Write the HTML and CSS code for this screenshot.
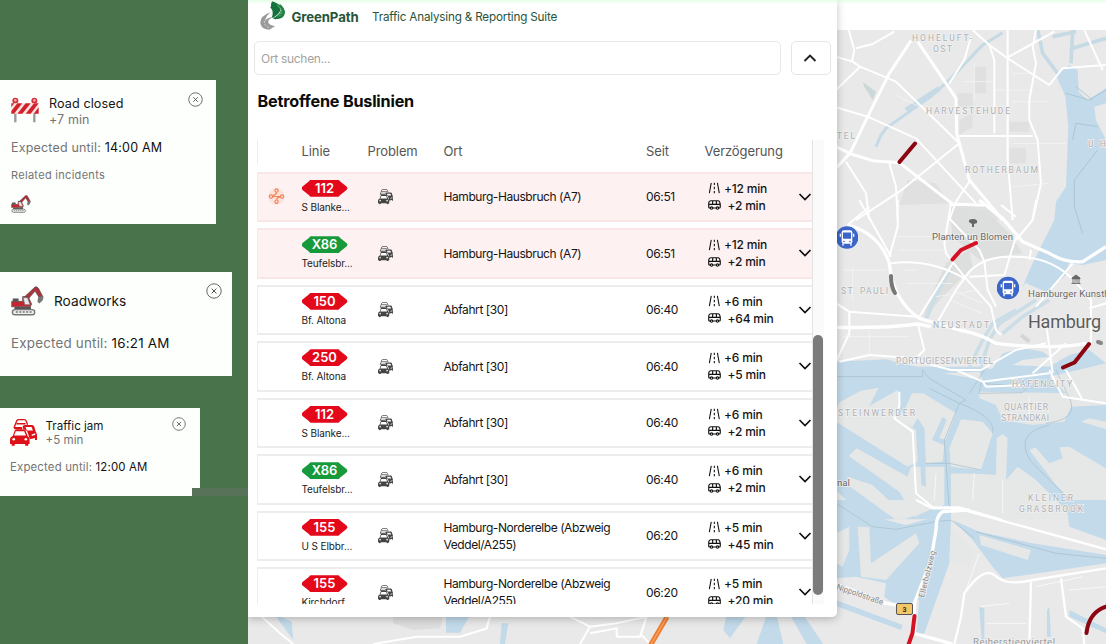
FILE: index.html
```html
<!DOCTYPE html>
<html lang="de">
<head>
<meta charset="utf-8">
<title>GreenPath</title>
<link rel="stylesheet" href="styles.css">
</head>
<body>
<svg class="defs" width="0" height="0" aria-hidden="true">
  <symbol id="close" viewBox="0 0 16 16"><circle cx="8" cy="8" r="7.2" fill="none" stroke="#666" stroke-width="1"/><path d="M5.6 5.6l4.8 4.8M10.4 5.6l-4.8 4.8" stroke="#555" stroke-width="1"/></symbol>
  <symbol id="digger" viewBox="0 0 96 86">
    <path d="M34 36L70 2Q76 0 80 6L93 31L84 36L70 14L44 44Z" fill="#a9343b" stroke="#5c4449" stroke-width="2"/>
    <path d="M79 32L93 28Q98 40 82 50L77 45Z" fill="#777"/>
    <path d="M2 44V60H56L60 52L50 30H34V44Z" fill="#c5252d" stroke="#5d4b4f" stroke-width="2"/>
    <path d="M35 33H48L56 54H40Z" fill="#e9e6ea" stroke="#666" stroke-width="2"/>
    <path d="M5 36H22V45H5ZM10 60H58V67H10Z" fill="#555"/>
    <rect x="4" y="68" width="65" height="15" rx="7.5" fill="#eee" stroke="#777" stroke-width="4"/>
    <path d="M14 75H60" stroke="#777" stroke-width="4" stroke-dasharray="6 4"/>
  </symbol>
  <symbol id="jam" viewBox="0 0 80 80">
    <path d="M12 27L15 18L20 5Q22 2 26 2H42Q46 2 48 6L52 17" fill="none" stroke="currentColor" stroke-width="4"/>
    <path d="M12 24H36V30H12Z" fill="currentColor"/><path d="M19 14H46" stroke="currentColor" stroke-width="4"/>
    <path d="M38 20Q42 17 48 18H66Q70 18 72 23L76 37Q80 42 80 48V62H74V56L59 60L51 36L38 28Z" fill="currentColor"/>
    <path d="M46 24H64L68 34H50Z" fill="#fff"/><path d="M64 46L75 42V47L65 50Z" fill="#fff"/>
    <path d="M8 50L14 34Q16 30 21 30H39Q44 30 46 34L52 50Q58 54 58 60V74H54V79H45V74H14V79H5V74H0V60Q0 53 8 50Z" fill="currentColor"/>
    <path d="M17 36H42L47 49H12Z" fill="#fff"/><circle cx="11" cy="60" r="4" fill="#fff"/><circle cx="47" cy="60" r="4" fill="#fff"/>
  </symbol>
  <symbol id="road" viewBox="0 0 14 14"><path d="M3.200 1L1 13M10.400 1L12.600 13M6.800 1V3.600M6.800 5.600V8.400M6.800 10.400V13" fill="none" stroke="#111" stroke-width="1.250"/></symbol>
  <symbol id="bus" viewBox="0 0 14 12"><path d="M2.600 9.200H1.800Q.8 9.200 .8 8.200V3.600Q1 1.400 3 1.400H11Q12.600 1.400 13.200 5V8.200Q13.200 9.200 12.200 9.200H11.400M5 9.200H9M.8 5.400H13M5 1.400V5.400M9 1.400V5.400" fill="none" stroke="#111" stroke-width="1.250"/><circle cx="3.800" cy="9.300" r="1.300" fill="none" stroke="#111" stroke-width="1.200"/><circle cx="10.200" cy="9.300" r="1.300" fill="none" stroke="#111" stroke-width="1.200"/></symbol>
  <symbol id="chev" viewBox="0 0 14 10"><path d="M1.500 2L7 7.600L12.500 2" fill="none" stroke="#111" stroke-width="1.700"/></symbol>
  <symbol id="stop" viewBox="0 0 66 72"><circle cx="33" cy="36" r="34" fill="#3b65c8"/><rect x="17" y="14" width="32" height="41" rx="6" fill="#fff"/><rect x="21" y="21" width="24" height="19" rx="1" fill="#3b65c8"/><path d="M13 25V34M53 25V34M21 54V61M45 54V61" stroke="#fff" stroke-width="4"/><circle cx="24" cy="48" r="2.500" fill="#3b65c8"/><circle cx="42" cy="48" r="2.500" fill="#3b65c8"/></symbol>
</svg>

<div class="page">
  <aside class="incidents">
    <article class="card closed">
      <header>
        <svg class="barrier" viewBox="0 0 82 78"><path d="M12 48V76M69 48V76" stroke="#999" stroke-width="7"/><circle cx="12" cy="11" r="9" fill="#d8303a"/><circle cx="69" cy="11" r="9" fill="#d8303a"/><circle cx="12" cy="10" r="4" fill="#f5a5a8"/><circle cx="69" cy="10" r="4" fill="#f5a5a8"/><rect y="19" width="82" height="31" fill="#f7e3e1"/><path d="M0 19H9L0 30ZM18 19H33L8 50H0V42ZM43 19H58L33 50H18ZM68 19H82L58 50H43ZM82 31V50H67Z" fill="#d4202b"/></svg>
        <div class="what"><h3>Road closed</h3><p>+7 min</p></div>
        <svg class="close"><use href="#close"/></svg>
      </header>
      <p class="until">Expected until: <b>14:00 AM</b></p>
      <p class="related">Related incidents</p>
      <svg class="mini"><use href="#digger"/></svg>
    </article>
    <article class="card works">
      <header>
        <svg class="dig"><use href="#digger"/></svg>
        <div class="what"><h3>Roadworks</h3></div>
        <svg class="close"><use href="#close"/></svg>
      </header>
      <p class="until">Expected until: <b>16:21 AM</b></p>
    </article>
    <article class="card traffic">
      <header>
        <svg class="cars"><use href="#jam"/></svg>
        <div class="what"><h3>Traffic jam</h3><p>+5 min</p></div>
        <svg class="close"><use href="#close"/></svg>
      </header>
      <p class="until">Expected until: <b>12:00 AM</b></p>
    </article>
    <i class="smudge"></i>
  </aside>

  <main class="app">
    <svg class="map" viewBox="248 30 858 614">
      <rect x="248" y="30" width="858" height="614" fill="#e9e9e9"/>
      <!-- parks and building blocks -->
      <g transform="translate(836 20) scale(.33333)" fill="#e0e0e0">
        <path d="M415 140H450V220H415ZM365 220H410V260H365ZM520 305H580V335H520ZM370 300L410 280V320L370 345ZM520 385H570V430H520ZM215 480L300 490L340 550L190 555ZM350 550L450 560L490 600H345Z"/>
        <path d="M80 185L120 215L110 240L85 200Z" fill="#cbd8d8"/><path d="M340 560L450 570L520 640L560 700L430 720L350 650Z" fill="#dcdfde"/>
        <path d="M330 730L400 690L410 740L320 830L260 900L275 850Z" fill="#dcdfde"/>
      </g>
      <!-- water -->
      <g transform="translate(836 20) scale(.33333)">
        <g fill="none" stroke="#c6dae5"><path d="M120 380L135 345L150 325L290 225L345 175L440 75L500 38" stroke-width="9"/><path d="M210 270L310 205" stroke-width="15"/><path d="M605 30L620 100L665 160M710 30L705 130M650 50L720 35M710 85L810 55" stroke-width="11"/></g>
        <path d="M660 165L700 135L725 150L728 215L755 240L810 205V250L775 260L780 300L810 360V720L740 735L700 730L630 710L560 800L585 740L655 600L660 545L690 500L697 320L688 230Z" fill="#c2daea"/>
        <path d="M690 220L760 240L810 210M710 360L720 310L785 320M720 200L770 240M785 390L715 480L715 560L740 640" fill="none" stroke="#9dbccd" stroke-width="2"/>
      </g>
      <g transform="translate(836 200) scale(.33333)">
        <path d="M570 250L605 165L700 185L690 225L630 275Z" fill="#c2daea"/>
        <path d="M345 205L320 250L290 310L272 355M400 500L435 430L470 370L540 330M435 500L460 420L490 370L600 300M500 400L560 350L640 300" fill="none" stroke="#cbdde7" stroke-width="11"/>
        <path d="M0 485L150 478L195 490L300 512L425 525L470 505L500 460L560 445L620 455L640 470L560 480L530 495L640 500L700 465L760 450L810 490V600H0Z" fill="#c2daea"/>
        <path d="M555 405L580 425" stroke="#d3d5d6" stroke-width="12" fill="none"/>
      </g>
      <g transform="translate(836 370) scale(.33333)">
        <path d="M0 -10H430L480 0H810V450H0Z" fill="#c2daea"/>
        <g fill="#e6e7e7">
          <path d="M10 97L75 62L128 53L100 108L185 60L195 100L180 140L240 180L245 275L215 290L0 155V120Z"/>
          <path d="M205 120L228 70L262 70L360 130L325 220L320 275L270 280L265 175L245 145L230 170L175 145Z"/>
          <path d="M375 148L440 155L470 190L435 300L345 290L340 235Z"/>
          <path d="M38 258L62 235L215 320L225 290L325 290V405L280 420L235 440L190 365Z"/>
          <path d="M35 320L110 345L210 440L180 450L90 385L35 345ZM0 360L90 450H0Z"/>
          <path d="M482 205L500 192L515 205L510 330L545 290L600 330L690 420L810 450H345V310L435 312L480 315Z"/>
          <path d="M580 240L598 232L640 280L680 265L670 232L700 230L810 295V450L735 420L660 345Z"/>
          <path d="M430 65L700 70L810 60V105L705 110L685 155L590 165L500 150L480 105L430 85ZM735 155L760 145L810 155V178ZM320 10L430 5L440 30Z"/>
          <path d="M640 20L810 -20V90L700 80Z"/>
        </g>
        <g fill="#c2daea"><path d="M245 150L265 190L270 350L256 345L250 210ZM320 140L332 150L310 205L335 210L325 225L288 210Z"/></g>
        <path d="M435 40L575 50L560 68L430 70ZM260 0L280 25L390 90L370 100Q480 140 470 190M0 20H260V0M280 55L370 100L325 210L340 420M445 0L400 70M660 0L705 95Q720 150 630 160M640 165Q530 190 585 275L700 390M270 280H340L435 300" fill="none" stroke="#a6bdc9" stroke-width="2"/>
      </g>
      <g transform="translate(836 500) scale(.33333)">
        <path d="M0 58H810V432H0Z" fill="#e9e9e9"/>
        <g fill="#c2daea">
          <path d="M0 0H90L150 60L210 75L300 50L345 60L340 190L265 400L240 405L250 300L185 320L145 290L150 250L60 230L0 235Z"/>
          <path d="M350 60L430 95L590 130L810 165V190L500 235L470 200L410 120ZM690 0H810V120L700 80ZM0 300L200 375L195 390L0 318ZM430 320L445 325V432H438ZM700 330L810 385V400L700 350ZM640 320L645 410H633V330Z"/>
        </g>
        <path d="M0 100L40 80V150L20 200L0 190ZM65 80L100 82L105 190L240 100L250 130L150 240L75 230ZM345 90L420 155L400 200L340 180ZM430 105L585 150L575 180L435 135ZM110 0H230L280 30L200 60Z" fill="#e6e7e7"/>
        <path d="M0 10L110 80L180 88L300 65L345 60L415 115M420 95L660 160L810 175" fill="none" stroke="#a6bdc9" stroke-width="2"/>
      </g>
      <g transform="translate(250 500) scale(.33333)"><path d="M70 340L125 365L130 420ZM588 345H660L630 398H588ZM755 370H775L765 432H750Z" fill="#c2daea"/><path d="M430 345H580L570 385L490 390L430 370Z" fill="#ddd"/></g>
      <g transform="translate(540 500) scale(.33333)"><path d="M560 345H620L570 415L550 390ZM680 345H710L730 432H650ZM750 345H790L850 432H800Z" fill="#c2daea"/></g>
      <!-- streets -->
      <g transform="translate(836 20) scale(.33333)" fill="none" stroke="#fff" stroke-width="6" stroke-linejoin="round">
        <path d="M0 380L45 402L110 422L190 428L350 552L445 556M225 62L160 160L95 290L42 400L0 445M245 65L330 190L360 235L362 340L400 480L500 600" stroke-width="9"/>
        <path d="M0 110L50 125L72 140L0 210M38 30L55 90L48 125M60 85L110 72L175 35M72 140L180 185L370 370M0 262L100 292L240 355L420 550M370 348H590M410 30L460 75L475 120V340M405 50L385 120L340 190M460 75L515 115L640 195L680 145L810 135M515 30V420L530 600M515 112L655 35M600 30L590 80L600 130L580 240V300L605 360L615 490L590 600M370 370L190 515L60 600M30 425L90 520L100 600M160 430L180 500L185 600M400 485L360 545L340 600M745 30L800 150"/>
        <path d="M380 185H470M415 130V240M530 160H580M530 245H640M530 370H690M530 500L640 490M180 225L250 260M480 210H580" stroke-width="2" stroke="#f7f7f7"/>
      </g>
      <g transform="translate(836 200) scale(.33333)" fill="none" stroke="#fff" stroke-width="6" stroke-linejoin="round">
        <path d="M35 75Q130 100 160 190Q170 300 250 355L370 390Q430 400 480 430Q650 450 750 430M430 0L500 55L560 125L640 160Q690 190 740 185L810 140M0 382Q150 385 245 372L285 380" stroke-width="10"/>
        <path d="M340 15L445 15M345 10L325 130L330 160L385 230L465 320L480 390L495 405M165 190Q280 175 385 235M250 350L350 190M305 365L360 270L400 215Q450 165 540 170Q660 170 730 260L765 300V430M495 15L540 50M540 110L505 225L400 230M445 185L455 270L480 320M585 150L580 180M600 0L590 60L540 120M340 55L430 150L445 185M0 310L40 335L245 350M40 335V400L0 485M245 370L265 450L240 475L100 465L10 485M70 0L165 170M185 0V80L160 170M100 20L35 75M710 190L600 320M200 470L345 510H435L540 450L630 430M760 325L810 310M630 370L640 440L650 520M690 430L590 520"/>
        <path d="M180 110H300M190 150H320M200 210H240M210 250H350M430 270L300 290M340 300L440 340M350 270L440 310M20 210H150M20 410H220M100 390V470M50 200V300" stroke-width="2" stroke="#f7f7f7"/>
      </g>
      <g transform="translate(836 370) scale(.33333)" fill="none" stroke="#fff" stroke-width="6" stroke-linejoin="round">
        <path d="M190 65V110L175 145L230 185L240 370L290 412H370L500 450M360 0L440 35L640 10M640 0L680 80L810 100M440 35L450 50L570 45M690 0L740 90"/><path d="M415 310L410 390M300 310L295 390M500 330V430M580 80V150" stroke-width="2"/>
      </g>
      <g transform="translate(836 500) scale(.33333)" fill="none" stroke="#fff" stroke-width="7" stroke-linejoin="round">
        <path d="M240 0L290 25H370L410 38L810 148"/><path d="M400 30L320 35Q300 45 300 90L285 180L235 310L235 400L350 432M0 252L150 310L235 322" stroke-width="10"/>
        <path d="M355 432L375 350L385 280Q440 200 475 225Q510 260 590 240L810 205M585 245L580 432M675 235L690 350L740 385L745 432"/><path d="M430 160L390 270M600 260L740 230M700 270L810 260M430 320L520 310M450 370H570" stroke-width="2"/>
      </g>
      <g transform="translate(250 500) scale(.33333)" fill="none" stroke="#fff" stroke-width="6"><path d="M30 345L90 400L130 432M370 432L500 410H630L710 385L720 350M950 345L1020 380L990 432M1020 380L1100 370L1190 350M1020 400L1100 385V410H1170L1190 350M1170 400L1200 432"/></g>
      <!-- incidents -->
      <g fill="none" stroke-linecap="round" stroke-linejoin="round" stroke-width="4">
        <path d="M899.500 162L915 143.500M1063 367.500L1074.500 362.500L1089 344" stroke="#8c0611"/><path d="M952.500 259.500L961 250L976 243M914.500 616L912.500 633L908 646" stroke="#d51224"/><path d="M891 276Q891 287 895 293" stroke="#777"/><path d="M1086.500 633Q1089 611 1108 606" stroke="#8c0611"/>
        <path d="M667 617L650 646" stroke="#ef7e32" stroke-width="5" stroke-linecap="butt"/><path d="M667 617L650 646" stroke="#f9b070" stroke-width="1" stroke-linecap="butt"/>
        <path d="M1098 342L1101 343" stroke="#888"/>
      </g>
      <!-- labels -->
      <g class="district">
        <text x="912" y="41" textLength="60">HOHELUFT-</text><text x="933" y="52" textLength="19">OST</text><text x="926" y="114" textLength="84">HARVESTEHUDE</text><text x="837" y="139" textLength="18">TEL</text><text x="965" y="173" textLength="73">ROTHERBAUM</text><text x="1088" y="147" textLength="40">UHLE</text>
        <text x="841" y="294" textLength="47">ST. PAULI</text><text x="933" y="328" textLength="56">NEUSTADT</text><text x="896" y="364" textLength="97">PORTUGIESENVIERTEL</text><text x="1012" y="387" textLength="60">HAFENCITY</text><text x="838" y="416" textLength="77">STEINWERDER</text><text x="1004" y="410" textLength="44">QUARTIER</text><text x="1001" y="421" textLength="48">STRANDKAI</text><text x="1028" y="501" textLength="45">KLEINER</text><text x="1019" y="512" textLength="64">GRASBROOK</text>
      </g>
      <g class="place"><text x="932" y="240" textLength="81">Planten un Blomen</text><text x="1028" y="297" textLength="97">Hamburger Kunsthalle</text><text class="city" x="1028" y="327.500" textLength="73">Hamburg</text><text class="pale" x="973" y="645" textLength="82">Reiherstiegviertel</text><text x="837" y="486">nal</text><text class="street" transform="translate(836 589) rotate(19)" textLength="49">Nippoldstraße</text><text class="street" transform="translate(924 598) rotate(-76)" textLength="48">Ellerholzweg</text></g>
      <path d="M969 222Q968 219 973 219Q978 219 977 223L974 224V227H972V224Z" fill="#666"/><path d="M1072 278L1076 275L1080 278V279H1072ZM1073 279.500V283M1075 279.500V283M1077 279.500V283M1079 279.500V283M1071.500 283.500H1080.500" fill="#666" stroke="#666" stroke-width=".9"/>
      <use href="#stop" x="836" y="225.500" width="22" height="24"/><use href="#stop" x="997" y="276" width="22" height="24"/>
      <rect x="896.500" y="603.500" width="16" height="11" rx="1.500" fill="#f3c765" stroke="#555"/><text x="902.500" y="611.700" class="route">3</text>
    </svg>

    <div class="topbar"></div>
    <section class="panel">
      <header class="brand">
        <svg class="logo" viewBox="0 0 76 84"><path d="M35 0Q58 6 60 22Q62 32 40 48L34 49Q42 31 30 18Q34 16 32 10ZM57 7Q73 20 72 36Q70 52 45 53L38 51Q62 38 62 24Q62 14 57 7Z" fill="#17713d"/><path d="M36 3Q64 14 60 31Q57 43 40 49Q78 48 72 28Q67 8 36 3Z" fill="#238447"/><path d="M31 32Q-4 46 2 68Q6 82 28 84L44 73Q24 70 24 60Q24 52 43 46Q22 47 14 58Q18 43 31 32Z" fill="#999"/><path d="M13 58Q10 73 31 79" fill="none" stroke="#eee" stroke-width="2" stroke-dasharray="6 4"/><path d="M51 13Q69 27 58 42" fill="none" stroke="#d7eedd" stroke-width="2" stroke-dasharray="4 4"/></svg>
        <strong>GreenPath</strong><span>Traffic Analysing &amp; Reporting Suite</span>
      </header>
      <div class="search"><div class="field">Ort suchen...</div><button class="toggle"><svg viewBox="0 0 14 10"><path d="M1.500 8L7 2.600L12.500 8" fill="none" stroke="#222" stroke-width="1.900"/></svg></button></div>
      <h1>Betroffene Buslinien</h1>
      <div class="scroller">
        <div class="table">
          <div class="row head"><i></i><span>Linie</span><span>Problem</span><span>Ort</span><span>Seit</span><span>Verzögerung</span></div>
          <div class="row alert"><svg class="hub" viewBox="0 0 46 46"><circle cx="23" cy="23" r="22" fill="#fbe3dc"/><g fill="none" stroke="#f08058" stroke-width="3"><circle cx="8" cy="23" r="4.500"/><circle cx="23" cy="37" r="4.500"/><circle cx="38" cy="23" r="4.500"/><circle cx="23" cy="7" r="4.500"/><path d="M13 23H33M23 12Q23 18 14 20M23 32Q23 26 32 25"/></g></svg><div class="line"><b class="badge">112</b><small>S Blanke...</small></div><svg class="jam"><use href="#jam"/></svg><span>Hamburg-Hausbruch (A7)</span><span>06:51</span><div class="delay"><span><svg><use href="#road"/></svg>+12 min</span><span><svg><use href="#bus"/></svg>+2 min</span></div><svg class="chev"><use href="#chev"/></svg></div>
          <div class="row alert"><i></i><div class="line"><b class="badge express">X86</b><small>Teufelsbr...</small></div><svg class="jam"><use href="#jam"/></svg><span>Hamburg-Hausbruch (A7)</span><span>06:51</span><div class="delay"><span><svg><use href="#road"/></svg>+12 min</span><span><svg><use href="#bus"/></svg>+2 min</span></div><svg class="chev"><use href="#chev"/></svg></div>
          <div class="row"><i></i><div class="line"><b class="badge">150</b><small>Bf. Altona</small></div><svg class="jam"><use href="#jam"/></svg><span>Abfahrt [30]</span><span>06:40</span><div class="delay"><span><svg><use href="#road"/></svg>+6 min</span><span><svg><use href="#bus"/></svg>+64 min</span></div><svg class="chev"><use href="#chev"/></svg></div>
          <div class="row"><i></i><div class="line"><b class="badge">250</b><small>Bf. Altona</small></div><svg class="jam"><use href="#jam"/></svg><span>Abfahrt [30]</span><span>06:40</span><div class="delay"><span><svg><use href="#road"/></svg>+6 min</span><span><svg><use href="#bus"/></svg>+5 min</span></div><svg class="chev"><use href="#chev"/></svg></div>
          <div class="row"><i></i><div class="line"><b class="badge">112</b><small>S Blanke...</small></div><svg class="jam"><use href="#jam"/></svg><span>Abfahrt [30]</span><span>06:40</span><div class="delay"><span><svg><use href="#road"/></svg>+6 min</span><span><svg><use href="#bus"/></svg>+2 min</span></div><svg class="chev"><use href="#chev"/></svg></div>
          <div class="row"><i></i><div class="line"><b class="badge express">X86</b><small>Teufelsbr...</small></div><svg class="jam"><use href="#jam"/></svg><span>Abfahrt [30]</span><span>06:40</span><div class="delay"><span><svg><use href="#road"/></svg>+6 min</span><span><svg><use href="#bus"/></svg>+2 min</span></div><svg class="chev"><use href="#chev"/></svg></div>
          <div class="row"><i></i><div class="line"><b class="badge">155</b><small>U S Elbbr...</small></div><svg class="jam"><use href="#jam"/></svg><span>Hamburg-Norderelbe (Abzweig Veddel/A255)</span><span>06:20</span><div class="delay"><span><svg><use href="#road"/></svg>+5 min</span><span><svg><use href="#bus"/></svg>+45 min</span></div><svg class="chev"><use href="#chev"/></svg></div>
          <div class="row"><i></i><div class="line"><b class="badge">155</b><small>Kirchdorf</small></div><svg class="jam"><use href="#jam"/></svg><span>Hamburg-Norderelbe (Abzweig Veddel/A255)</span><span>06:20</span><div class="delay"><span><svg><use href="#road"/></svg>+5 min</span><span><svg><use href="#bus"/></svg>+20 min</span></div><svg class="chev"><use href="#chev"/></svg></div>
        </div>
        <div class="track"><i class="thumb"></i></div>
      </div>
    </section>
  </main>
</div>
</body>
</html>
```
FILE: styles.css
```css
* { box-sizing: border-box; }
body { margin: 0; font-family: Inter, "Liberation Sans", sans-serif; color: #151515; }
h1, h3, p { margin: 0; }
svg { display: block; flex: none; }
.defs { position: absolute; }
.page { display: grid; grid-template-columns: 248px 858px; height: 644px; overflow: hidden; }

/* Incident cards */
.incidents { background: #48734b; padding-top: 80px; position: relative; }
.card { background: #fdfffd; }
.card header { display: flex; align-items: flex-start; }
.card h3 { font-weight: 400; color: #161616; }
.card p { color: #747474; }
.card b { font-weight: 400; color: #111; }
.card .close { margin-left: auto; }
.closed { width: 216px; height: 144px; padding: 12px 13px 0 11px; margin-bottom: 48px; }
.closed .barrier { width: 28px; height: 26px; margin-top: 5px; }
.closed .what { margin: 4px 0 0 10px; font-size: 12.5px; line-height: 15px; }
.closed h3 { font-size: 12.6px; line-height: 16px; letter-spacing: .1px; }
.closed .what p { letter-spacing: .1px; }
.closed .close { width: 15px; height: 15px; }
.closed .until { margin-top: 13px; font-size: 12.5px; line-height: 16px; letter-spacing: .18px; }
.closed .related { margin-top: 12px; font-size: 11px; line-height: 15px; letter-spacing: .3px; }
.closed .mini { width: 20px; height: 18px; margin-top: 12px; }
.works { width: 232px; height: 104px; padding: 11px 10px 0 11px; margin-bottom: 32px; }
.works .dig { width: 33px; height: 30px; margin-top: 3px; }
.works .what { margin: 10px 0 0 10px; }
.works h3 { font-size: 13.7px; line-height: 17px; }
.works .close { width: 16px; height: 16px; }
.works .until { margin-top: 19px; font-size: 13.4px; line-height: 17px; letter-spacing: .2px; }
.traffic { width: 200px; height: 88px; padding: 9px 14px 0 10px; clip-path: polygon(0 0, 100% 0, 100% 80px, 192px 80px, 192px 100%, 0 100%); }
.traffic .cars { width: 27px; height: 27px; margin-top: 2px; color: #df1118; }
.traffic .what { margin: 2px 0 0 8.500px; font-size: 11.6px; line-height: 14px; }
.traffic h3 { font-size: 11.6px; line-height: 14px; }
.traffic .close { width: 14px; height: 14px; }
.traffic .until { margin-top: 13px; font-size: 11.4px; line-height: 14px; letter-spacing: .17px; }
.smudge { position: absolute; left: 192px; top: 488px; width: 56px; height: 8px; background: #587159; }

/* Map */
.app { position: relative; background: #fff; overflow: hidden; }
.map { position: absolute; left: 0; top: 30px; width: 858px; height: 614px; }
.topbar { position: absolute; inset: 0 0 auto 0; height: 30px; background: linear-gradient(#e4ffe7, #fefffe 4px); }
.district { font: 8.5px Roboto, sans-serif; fill: #adb0b2; stroke: #f2f2f2; stroke-width: 1.5px; paint-order: stroke; }
.place { font: 9.6px Roboto, sans-serif; fill: #686868; stroke: #f0f0f0; stroke-width: 1.5px; paint-order: stroke; }
.place .city { font-size: 18px; fill: #5c5c5c; }
.place .street { font-size: 8px; fill: #888; }
.place .pale { fill: #999; }
.route { font: bold 7px Roboto, sans-serif; fill: #333; }

/* Panel */
.panel { position: relative; width: 589px; height: 617px; background: linear-gradient(#e4ffe7, #fefffe 4px); border-radius: 0 0 5px 0; box-shadow: 0 2px 8px rgba(0, 0, 0, .24); }
.brand { display: flex; align-items: center; height: 34px; padding-left: 12px; color: #28553a; }
.brand .logo { width: 26px; height: 29px; margin-top: -3px; }
.brand strong { margin-left: 5.500px; width: 80.500px; font-size: 13.2px; font-weight: 700; letter-spacing: -.1px; }
.brand span { font-size: 11.7px; letter-spacing: -.19px; }
.search { display: flex; gap: 10px; padding: 7px 6px 0; }
.field { width: 528px; height: 34px; border: 1px solid #e5e8e5; border-radius: 5px; padding-left: 6px; font-size: 12px; line-height: 33px; letter-spacing: -.3px; color: #a3a3a3; }
.toggle { width: 40px; height: 34px; padding: 0 2px 0 0; background: #fff; border: 1px solid #e5e5e5; border-radius: 5px; display: grid; place-items: center; }
.toggle svg { width: 14px; height: 10px; }
.panel h1 { margin: 16px 0 0 9.500px; font-size: 16.2px; line-height: 20px; font-weight: 700; letter-spacing: -.19px; color: #0b0b0b; }
.scroller { display: flex; margin: 29px 0 0 9px; height: 464px; overflow: hidden; }
.table { width: 555px; flex: none; display: flex; flex-direction: column; gap: 6px; }
.row { flex: none; display: grid; grid-template-columns: 43.500px 66px 76px 202.500px 58.500px 93.500px 14px; align-items: center; height: 50.500px; border: 2px solid #eceeec; border-right: 0; border-left-width: 1px; font-size: 12px; line-height: 17px; }
.row.head { height: 23.500px; border-width: 0 0 0 1px; color: #555; font-size: 13px; letter-spacing: -.1px; margin-bottom: 2px; }
.row.alert { background: #fdf1f1; border-color: #f9e7e7; }
.row > span { letter-spacing: -.35px; }
.row.head > span { letter-spacing: -.1px; }
.row > span:nth-of-type(1) { padding-right: 25px; letter-spacing: -.42px; }
.row.head > span:nth-of-type(1) { padding-right: 0; letter-spacing: -.1px; }
.line { display: flex; flex-direction: column; align-items: flex-start; }
.badge { width: 46px; height: 17px; color: #fff; background: #e4081b; font-size: 13px; font-weight: 600; line-height: 17px; text-align: center; clip-path: polygon(0 50%, 1px 40%, 7px 2px, 9px 0, 37px 0, 39px 2px, 45px 40%, 46px 50%, 45px 60%, 39px 15px, 37px 100%, 9px 100%, 7px 15px, 1px 60%); }
.badge.express { background: #179a3b; }
.line small { font-size: 10px; line-height: 13px; letter-spacing: -.1px; margin-top: 4px; color: #222; }
.hub { width: 17px; height: 17px; margin-left: 10px; }
.jam { width: 15.500px; height: 15.500px; margin-left: 10px; color: #444; }
.delay { display: flex; flex-direction: column; padding-left: 3px; font-weight: 500; letter-spacing: -.2px; }
.delay span { display: flex; align-items: center; height: 17.400px; }
.delay svg { width: 13px; height: 12px; margin-right: 3.500px; }
.delay span + span svg { margin-right: 7px; }
.chev { width: 14px; height: 10px; }
.track { width: 12px; border-left: 1px solid #e4e4e4; background: #fafafa; padding: 195px 1px 0 0; }
.thumb { display: block; width: 10px; height: 260px; border-radius: 5px; background: #7b7b7b; }
```
